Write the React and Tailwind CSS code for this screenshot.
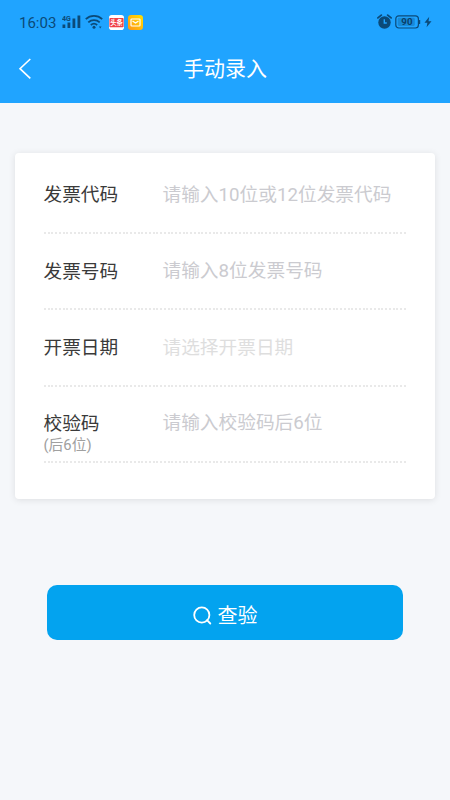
import { clsx } from "clsx";

const FIELDS = [
  { key: "code", label: "发票代码", placeholder: "请输入10位或12位发票代码" },
  { key: "number", label: "发票号码", placeholder: "请输入8位发票号码" },
  { key: "date", label: "开票日期", placeholder: "请选择开票日期", picker: true },
  { key: "check", label: "校验码", note: "(后6位)", placeholder: "请输入校验码后6位" },
];

const SignalIcon = () => (
  <svg width="20" height="16" viewBox="0 0 20 16" fill="#0b4a78">
    <text x="0" y="6.5" fontSize="7" fontWeight="700" fontFamily="Roboto, sans-serif">4G</text>
    <rect x="0.5" y="10.5" width="2.8" height="3.5" />
    <rect x="5.5" y="8.5" width="2.8" height="5.5" />
    <rect x="10.5" y="4.5" width="2.8" height="9.5" />
    <rect x="15.5" y="1.5" width="2.8" height="12.5" />
  </svg>
);

const WifiIcon = () => (
  <svg width="18" height="16" viewBox="0 0 18 16" fill="none" stroke="#0b4a78">
    <path d="M0.8 5.2 A12 12 0 0 1 17.2 5.2" strokeWidth="1.8" />
    <path d="M3.3 8.3 A8.5 8.5 0 0 1 14.7 8.3" strokeWidth="1.8" />
    <path d="M5.8 11 A5 5 0 0 1 12.2 11" strokeWidth="1.8" />
    <circle cx="9" cy="13.2" r="1.5" fill="#0b4a78" stroke="none" />
    <path d="M14 12.5 L16.5 12.5 L15.2 14.5 Z" fill="#0b4a78" stroke="none" />
  </svg>
);

const NewsBadge = () => (
  <svg width="15" height="15" viewBox="0 0 15 15">
    <rect width="15" height="15" rx="2.8" fill="#fff" />
    <rect x="0.4" y="3" width="14.2" height="9.2" rx="0.8" fill="#f04146" />
    <text x="7.5" y="9.9" fontSize="6.3" fontWeight="700" fill="#fff" textAnchor="middle" fontFamily="'Noto Sans CJK SC', sans-serif">头条</text>
  </svg>
);

const MailBadge = () => (
  <svg width="15" height="15" viewBox="0 0 15 15" fill="none">
    <defs>
      <linearGradient id="mail" x1="1" y1="0" x2="0" y2="1">
        <stop stopColor="#ffe100" />
        <stop offset="1" stopColor="#ff9418" />
      </linearGradient>
    </defs>
    <rect width="15" height="15" rx="3.2" fill="url(#mail)" />
    <rect x="3" y="4" width="9" height="7" rx="0.8" stroke="#fff" strokeWidth="1.2" />
    <path d="M4.5 6 L7.5 8 L10.5 6" stroke="#fff" strokeWidth="1.2" />
  </svg>
);

const AlarmIcon = () => (
  <svg width="15" height="16" viewBox="0 0 15 16" fill="none">
    <circle cx="7.5" cy="8.5" r="6.2" fill="#0b4a78" />
    <path d="M0.9 3.9 L4.3 1.1 M10.7 1.1 L14.1 3.9" stroke="#0b4a78" strokeWidth="1.8" strokeLinecap="round" />
    <path d="M7.3 5.3 V9 H9.8" stroke="#20a4ff" strokeWidth="1.4" />
  </svg>
);

const BatteryIcon = () => (
  <svg width="26" height="14" viewBox="0 0 26 14">
    <rect x="0.8" y="0.8" width="22.6" height="12.2" rx="3" fill="none" stroke="#0b4a78" strokeWidth="1.2" />
    <rect x="2.8" y="2.8" width="17" height="8.2" rx="1.4" fill="#188ad8" />
    <rect x="23.8" y="5" width="1.4" height="4" rx="0.6" fill="#0b4a78" />
    <text x="11.9" y="10.4" fontSize="9.7" fontWeight="700" fill="#0b3f68" textAnchor="middle" fontFamily="Roboto, sans-serif">90</text>
  </svg>
);

const StatusBar = () => (
  <div className="flex h-11 items-center pl-[19px] pr-[18px] text-[#0b4a78]">
    <span className="w-[43px] pt-[2px] text-[15px] leading-none">16:03</span>
    <SignalIcon />
    <div className="ml-[3px] flex"><WifiIcon /></div>
    <div className="ml-[6px] flex gap-1">
      <NewsBadge />
      <MailBadge />
    </div>
    <div className="ml-auto flex items-center">
      <AlarmIcon />
      <div className="ml-[3px]"><BatteryIcon /></div>
      <svg className="ml-[3px]" width="8" height="12" viewBox="0 0 8 12" fill="#0b4a78">
        <path d="M5.2 0.8 L0.5 6.7 H3.4 L2.6 11.2 L7.5 5.2 H4.5 Z" />
      </svg>
    </div>
  </div>
);

const FieldRow = ({ field }) => (
  <div className="h-[76.2px]">
    <div className="flex h-[74.2px] pt-[23.4px]">
      <div className="w-[119px] shrink-0">
        <div className="text-[18.7px] leading-[28px] text-[#3a3a3a]">{field.label}</div>
        {field.note && <div className="-mt-[4px] text-[14.8px] leading-[22px] text-[#a0a0a0]">{field.note}</div>}
      </div>
      <div className={clsx("whitespace-nowrap text-[18.7px] leading-[28px]", field.picker ? "text-[#dedede]" : "-mt-[0.6px] text-[#cbcbd0]")}>
        {field.placeholder}
      </div>
    </div>
    <div className="h-[2px] bg-[repeating-linear-gradient(90deg,#e9e9e9_0_1.8px,transparent_1.8px_3.75px)]" />
  </div>
);

export default function App() {
  return (
    <div className="min-h-[800px] w-[450px] bg-[#f5f7fa] font-[Roboto,'Noto_Sans_CJK_SC',sans-serif]">
      <header className="h-[103px] bg-[#20a4ff]">
        <StatusBar />
        <div className="grid h-[50px] grid-cols-[60px_1fr_60px] items-center">
          <svg className="ml-[18px]" width="14" height="22" viewBox="0 0 14 22" fill="none" stroke="#fff" strokeWidth="1.6">
            <path d="M12.3 1 L2 10.7 L12.3 20.4" />
          </svg>
          <h1 className="text-center text-[21px] leading-[30px] text-white">手动录入</h1>
        </div>
      </header>

      <main className="pt-[50px]">
        <section className="mx-[15px] h-[346px] rounded bg-white px-[28.5px] pt-[5px] shadow-[0_1px_7px_rgba(0,0,0,0.1)]">
          {FIELDS.map((f) => (
            <FieldRow key={f.key} field={f} />
          ))}
        </section>

        <button className="ml-[47px] mt-[86px] flex h-[55px] w-[356px] items-center justify-center gap-[6px] rounded-[10px] bg-[#03a3ef] pt-[6px] text-[20px] leading-[30px] text-white">
          <svg width="19" height="19" viewBox="0 0 19 19" fill="none" stroke="#fff" strokeWidth="1.8" strokeLinecap="round">
            <circle cx="8.8" cy="9" r="7.6" />
            <path d="M14 14.2 L17.3 17.5" />
          </svg>
          查验
        </button>
      </main>
    </div>
  );
}
